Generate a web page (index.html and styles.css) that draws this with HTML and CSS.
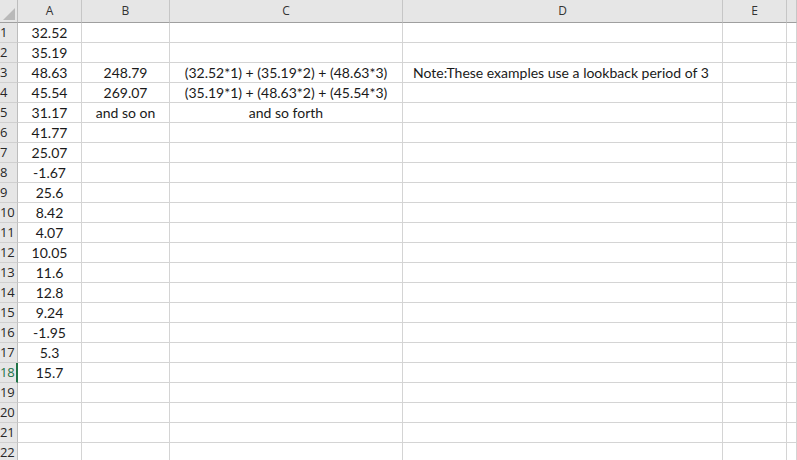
FILE: index.html
```html
<!DOCTYPE html>
<html>
<head>
<meta charset="utf-8">
<link rel="stylesheet" href="styles.css">
</head>
<body>
<div class="sheet">
  <div class="row head">
    <div class="rh corner"><span class="tri"></span></div>
    <div class="c a">A</div><div class="c b">B</div><div class="c cc">C</div><div class="c d">D</div><div class="c e">E</div><div class="c f"></div>
  </div>
  <div class="row"><div class="rh">1</div><div class="c a">32.52</div><div class="c b"></div><div class="c cc"></div><div class="c d"></div><div class="c e"></div><div class="c f"></div></div>
  <div class="row"><div class="rh">2</div><div class="c a">35.19</div><div class="c b"></div><div class="c cc"></div><div class="c d"></div><div class="c e"></div><div class="c f"></div></div>
  <div class="row"><div class="rh">3</div><div class="c a">48.63</div><div class="c b">248.79</div><div class="c cc">(32.52*1) + (35.19*2) + (48.63*3)</div><div class="c d note">Note:These examples use a lookback period of 3</div><div class="c e"></div><div class="c f"></div></div>
  <div class="row"><div class="rh">4</div><div class="c a">45.54</div><div class="c b">269.07</div><div class="c cc">(35.19*1) + (48.63*2) + (45.54*3)</div><div class="c d"></div><div class="c e"></div><div class="c f"></div></div>
  <div class="row"><div class="rh">5</div><div class="c a">31.17</div><div class="c b">and so on</div><div class="c cc">and so forth</div><div class="c d"></div><div class="c e"></div><div class="c f"></div></div>
  <div class="row"><div class="rh">6</div><div class="c a">41.77</div><div class="c b"></div><div class="c cc"></div><div class="c d"></div><div class="c e"></div><div class="c f"></div></div>
  <div class="row"><div class="rh">7</div><div class="c a">25.07</div><div class="c b"></div><div class="c cc"></div><div class="c d"></div><div class="c e"></div><div class="c f"></div></div>
  <div class="row"><div class="rh">8</div><div class="c a">-1.67</div><div class="c b"></div><div class="c cc"></div><div class="c d"></div><div class="c e"></div><div class="c f"></div></div>
  <div class="row"><div class="rh">9</div><div class="c a">25.6</div><div class="c b"></div><div class="c cc"></div><div class="c d"></div><div class="c e"></div><div class="c f"></div></div>
  <div class="row"><div class="rh">10</div><div class="c a">8.42</div><div class="c b"></div><div class="c cc"></div><div class="c d"></div><div class="c e"></div><div class="c f"></div></div>
  <div class="row"><div class="rh">11</div><div class="c a">4.07</div><div class="c b"></div><div class="c cc"></div><div class="c d"></div><div class="c e"></div><div class="c f"></div></div>
  <div class="row"><div class="rh">12</div><div class="c a">10.05</div><div class="c b"></div><div class="c cc"></div><div class="c d"></div><div class="c e"></div><div class="c f"></div></div>
  <div class="row"><div class="rh">13</div><div class="c a">11.6</div><div class="c b"></div><div class="c cc"></div><div class="c d"></div><div class="c e"></div><div class="c f"></div></div>
  <div class="row"><div class="rh">14</div><div class="c a">12.8</div><div class="c b"></div><div class="c cc"></div><div class="c d"></div><div class="c e"></div><div class="c f"></div></div>
  <div class="row"><div class="rh">15</div><div class="c a">9.24</div><div class="c b"></div><div class="c cc"></div><div class="c d"></div><div class="c e"></div><div class="c f"></div></div>
  <div class="row"><div class="rh">16</div><div class="c a">-1.95</div><div class="c b"></div><div class="c cc"></div><div class="c d"></div><div class="c e"></div><div class="c f"></div></div>
  <div class="row"><div class="rh">17</div><div class="c a">5.3</div><div class="c b"></div><div class="c cc"></div><div class="c d"></div><div class="c e"></div><div class="c f"></div></div>
  <div class="row"><div class="rh sel">18</div><div class="c a">15.7</div><div class="c b"></div><div class="c cc"></div><div class="c d"></div><div class="c e"></div><div class="c f"></div></div>
  <div class="row"><div class="rh">19</div><div class="c a"></div><div class="c b"></div><div class="c cc"></div><div class="c d"></div><div class="c e"></div><div class="c f"></div></div>
  <div class="row"><div class="rh">20</div><div class="c a"></div><div class="c b"></div><div class="c cc"></div><div class="c d"></div><div class="c e"></div><div class="c f"></div></div>
  <div class="row"><div class="rh">21</div><div class="c a"></div><div class="c b"></div><div class="c cc"></div><div class="c d"></div><div class="c e"></div><div class="c f"></div></div>
  <div class="row"><div class="rh">22</div><div class="c a"></div><div class="c b"></div><div class="c cc"></div><div class="c d"></div><div class="c e"></div><div class="c f"></div></div>
</div>
</body>
</html>
```
FILE: styles.css
```css
html, body {
  margin: 0;
  padding: 0;
  background: #ffffff;
  overflow: hidden;
}
.sheet {
  width: 797px;
  height: 460px;
  overflow: hidden;
  font-family: Lato, "Open Sans", sans-serif;
  font-size: 14px;
  color: #1a1a1a;
}
.row {
  display: grid;
  grid-template-columns: 18px 64px 88px 233px 320px 64px 1fr;
  height: 20px;
}
.row > div {
  box-sizing: border-box;
  border-right: 1px solid #d4d4d4;
  border-bottom: 1px solid #d4d4d4;
  white-space: nowrap;
  overflow: hidden;
  line-height: 19px;
}
.c {
  text-align: center;
}
.c.note {
  text-align: left;
  padding-left: 10px;
}
.rh {
  background: #e6e6e6;
  color: #262626;
  padding-left: 0;
  font-family: "Open Sans", sans-serif;
  font-size: 13px;
  letter-spacing: -0.3px;
  border-right: 1px solid #bdbdbd !important;
  border-bottom: 1px solid #d0d0d0 !important;
}
.rh.sel {
  color: #217346;
  border-right: 2px solid #217346 !important;
}
.head {
  height: 23px;
}
.head > div {
  background: #e6e6e6;
  color: #333;
  font-family: "Open Sans", sans-serif;
  font-size: 12px;
  line-height: 22px;
  border-right: 1px solid #c6c6c6;
  border-bottom: 1px solid #9f9f9f !important;
}
.corner {
  position: relative;
}
.tri {
  position: absolute;
  right: 2px;
  bottom: 2px;
  width: 0;
  height: 0;
  border-left: 12px solid transparent;
  border-bottom: 12px solid #b9b9b9;
}
```
